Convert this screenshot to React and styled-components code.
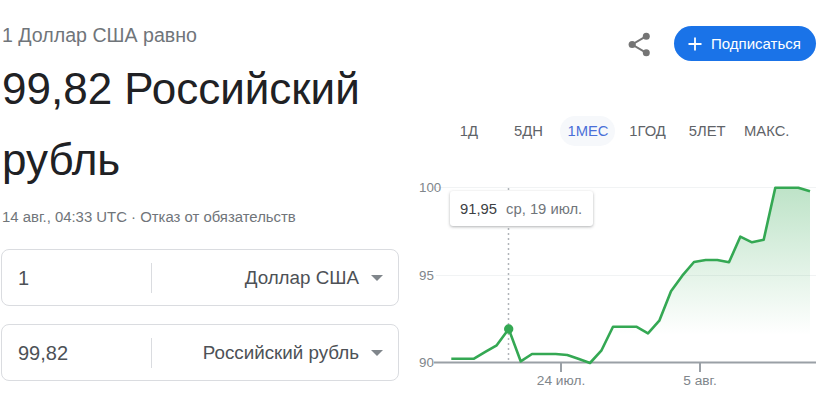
import React from "react";
import styled, { createGlobalStyle } from "styled-components";

const Global = createGlobalStyle`
  html, body { margin: 0; padding: 0; background: #fff; overflow: hidden; }
  body { font-family: "Liberation Sans", Arial, sans-serif; }
`;

const Page = styled.div`
  display: flex;
  width: 827px;
  height: 409px;
  overflow: hidden;
`;

const Left = styled.div`
  width: 398px;
  margin-left: 1px;
  margin-right: 15px;
  padding-top: 24px;
  box-sizing: border-box;
`;

const Lead = styled.div`
  font-size: 19.6px;
  line-height: 22px;
  color: #70757a;
  padding-left: 1px;
`;

const Rate = styled.div`
  font-size: 44px;
  line-height: 71px;
  color: #202124;
  padding-left: 1px;
  margin-top: 7px;
`;

const Stamp = styled.div`
  font-size: 14.9px;
  line-height: 18px;
  color: #70757a;
  padding-left: 1px;
  margin-top: 13px;
`;

const Converter = styled.div`
  display: flex;
  flex-direction: column;
  gap: 18px;
  margin-top: 23px;
`;

const ConvertRow = styled.div`
  display: flex;
  align-items: center;
  height: 57px;
  box-sizing: border-box;
  border: 1px solid #dadce0;
  border-radius: 8px;
`;

const Amount = styled.div`
  width: 150px;
  height: 30px;
  line-height: 30px;
  box-sizing: border-box;
  padding-left: 16px;
  border-right: 1px solid #dadce0;
  font-size: 20px;
  color: #4d5156;
`;

const Currency = styled.div`
  flex: 1;
  display: flex;
  align-items: center;
  justify-content: flex-end;
  gap: 12px;
  padding-right: 15px;
  font-size: 18.8px;
  color: #4d5156;
`;

const Caret = styled.span`
  width: 0;
  height: 0;
  border-left: 6px solid transparent;
  border-right: 6px solid transparent;
  border-top: 6px solid #80868b;
`;

const Right = styled.div`
  flex: 1;
  min-width: 0;
  display: flex;
  flex-direction: column;
`;

const TopBar = styled.div`
  display: flex;
  align-items: center;
  justify-content: flex-end;
  gap: 21px;
  padding-top: 26px;
  padding-right: 11px;
`;

const ShareButton = styled.div`
  display: flex;
  width: 26px;
  height: 26px;
`;

const Subscribe = styled.div`
  display: flex;
  align-items: center;
  gap: 9px;
  width: 142px;
  height: 35px;
  box-sizing: border-box;
  padding-left: 14px;
  background: #1a73e8;
  border-radius: 18px;
  color: #fff;
  font-size: 15px;
`;

const Ranges = styled.div`
  display: grid;
  grid-template-columns: repeat(6, 59.6px);
  margin-top: 55px;
  padding-left: 25px;
`;

const RangeTab = styled.div`
  justify-self: center;
  width: 55px;
  height: 30px;
  line-height: 30px;
  text-align: center;
  border-radius: 15px;
  font-size: 14.8px;
  white-space: nowrap;
  color: ${(p) => (p.$active ? "#4a6fd8" : "#5f6368")};
  background: ${(p) => (p.$active ? "#f6f8fb" : "transparent")};
`;

const ChartWrap = styled.div`
  position: relative;
  height: 239px;
  margin-top: 24px;
`;

const Tooltip = styled.div`
  position: absolute;
  left: 36px;
  top: 21px;
  display: flex;
  align-items: center;
  gap: 9px;
  width: 143px;
  height: 35px;
  box-sizing: border-box;
  padding-left: 10px;
  background: #fff;
  border-radius: 3px;
  box-shadow: 0 1px 3px rgba(60, 64, 67, 0.4);
  font-size: 14.8px;
  white-space: nowrap;
`;

const TipValue = styled.span`
  color: #3c4043;
`;

const TipDate = styled.span`
  color: #70757a;
`;

const AxisText = styled.text`
  font-family: "Liberation Sans", Arial, sans-serif;
  font-size: 13.3px;
  fill: #80868b;
`;

const TickText = styled.text`
  font-family: "Liberation Sans", Arial, sans-serif;
  font-size: 13.7px;
  fill: #80868b;
  text-anchor: middle;
`;

const raw = [
  [112, 566], [180, 566], [215, 545], [248, 526], [284, 477], [320, 574], [354, 552],
  [425, 552], [460, 555], [495, 567], [528, 579], [562, 542], [597, 470], [667, 470],
  [702, 490], [736, 452], [771, 364], [805, 317], [840, 276], [875, 270], [910, 270],
  [945, 277], [979, 200], [1014, 217], [1049, 209], [1084, 53], [1153, 53], [1188, 64],
];
const line = raw.map(([x, y]) => `${(x / 3).toFixed(1)},${(y / 3).toFixed(1)}`).join(" ");
const area = `${line} 396,192 37.3,192`;

function Chart() {
  return (
    <svg width="413" height="239" viewBox="0 0 413 239" style={{ display: "block" }}>
      <defs>
        <linearGradient id="fade" gradientUnits="userSpaceOnUse" x1="0" y1="18" x2="0" y2="165">
          <stop offset="0" stopColor="#34a853" stopOpacity="0.32" />
          <stop offset="1" stopColor="#34a853" stopOpacity="0" />
        </linearGradient>
      </defs>
      <line x1="22" x2="402" y1="17.5" y2="17.5" stroke="#f1f3f4" />
      <line x1="22" x2="402" y1="105.5" y2="105.5" stroke="#f1f3f4" />
      <polygon points={area} fill="url(#fade)" />
      <line x1="94.5" x2="94.5" y1="18" y2="192" stroke="#b0b4b9" strokeWidth="1.5" strokeDasharray="2 3" />
      <line x1="20" x2="402" y1="192.5" y2="192.5" stroke="#9aa0a6" strokeWidth="2" />
      <line x1="147" x2="147" y1="192" y2="202" stroke="#9aa0a6" strokeWidth="2" />
      <line x1="286" x2="286" y1="192" y2="202" stroke="#9aa0a6" strokeWidth="2" />
      <polyline points={line} fill="none" stroke="#34a853" strokeWidth="2.6" strokeLinejoin="round" />
      <circle cx="94.7" cy="159" r="4.7" fill="#34a853" />
      <AxisText x="5" y="22">100</AxisText>
      <AxisText x="5" y="110">95</AxisText>
      <AxisText x="5" y="197">90</AxisText>
      <TickText x="147" y="215">24 июл.</TickText>
      <TickText x="286" y="215">5 авг.</TickText>
    </svg>
  );
}

const ranges = ["1Д", "5ДН", "1МЕС", "1ГОД", "5ЛЕТ", "МАКС."];

export default function App() {
  return (
    <Page>
      <Global />
      <Left>
        <Lead>1 Доллар США равно</Lead>
        <Rate>99,82 Российский рубль</Rate>
        <Stamp>14 авг., 04:33 UTC · Отказ от обязательств</Stamp>
        <Converter>
          <ConvertRow>
            <Amount>1</Amount>
            <Currency>Доллар США<Caret /></Currency>
          </ConvertRow>
          <ConvertRow>
            <Amount>99,82</Amount>
            <Currency>Российский рубль<Caret /></Currency>
          </ConvertRow>
        </Converter>
      </Left>
      <Right>
        <TopBar>
          <ShareButton>
            <svg width="26" height="26" viewBox="0 0 26 26">
              <path d="M19.3 5.2 L5.2 13.5 L19.3 21.8" fill="none" stroke="#757575" strokeWidth="2" />
              <circle cx="19.3" cy="5.2" r="3.5" fill="#757575" />
              <circle cx="5.2" cy="13.5" r="3.6" fill="#757575" />
              <circle cx="19.3" cy="21.8" r="3.5" fill="#757575" />
            </svg>
          </ShareButton>
          <Subscribe>
            <svg width="14" height="14" viewBox="0 0 14 14">
              <path d="M7 0.5 V13.5 M0.5 7 H13.5" stroke="#fff" strokeWidth="1.8" fill="none" />
            </svg>
            Подписаться
          </Subscribe>
        </TopBar>
        <Ranges>
          {ranges.map((r) => (
            <RangeTab key={r} $active={r === "1МЕС"}>{r}</RangeTab>
          ))}
        </Ranges>
        <ChartWrap>
          <Chart />
          <Tooltip>
            <TipValue>91,95</TipValue>
            <TipDate>ср, 19 июл.</TipDate>
          </Tooltip>
        </ChartWrap>
      </Right>
    </Page>
  );
}
